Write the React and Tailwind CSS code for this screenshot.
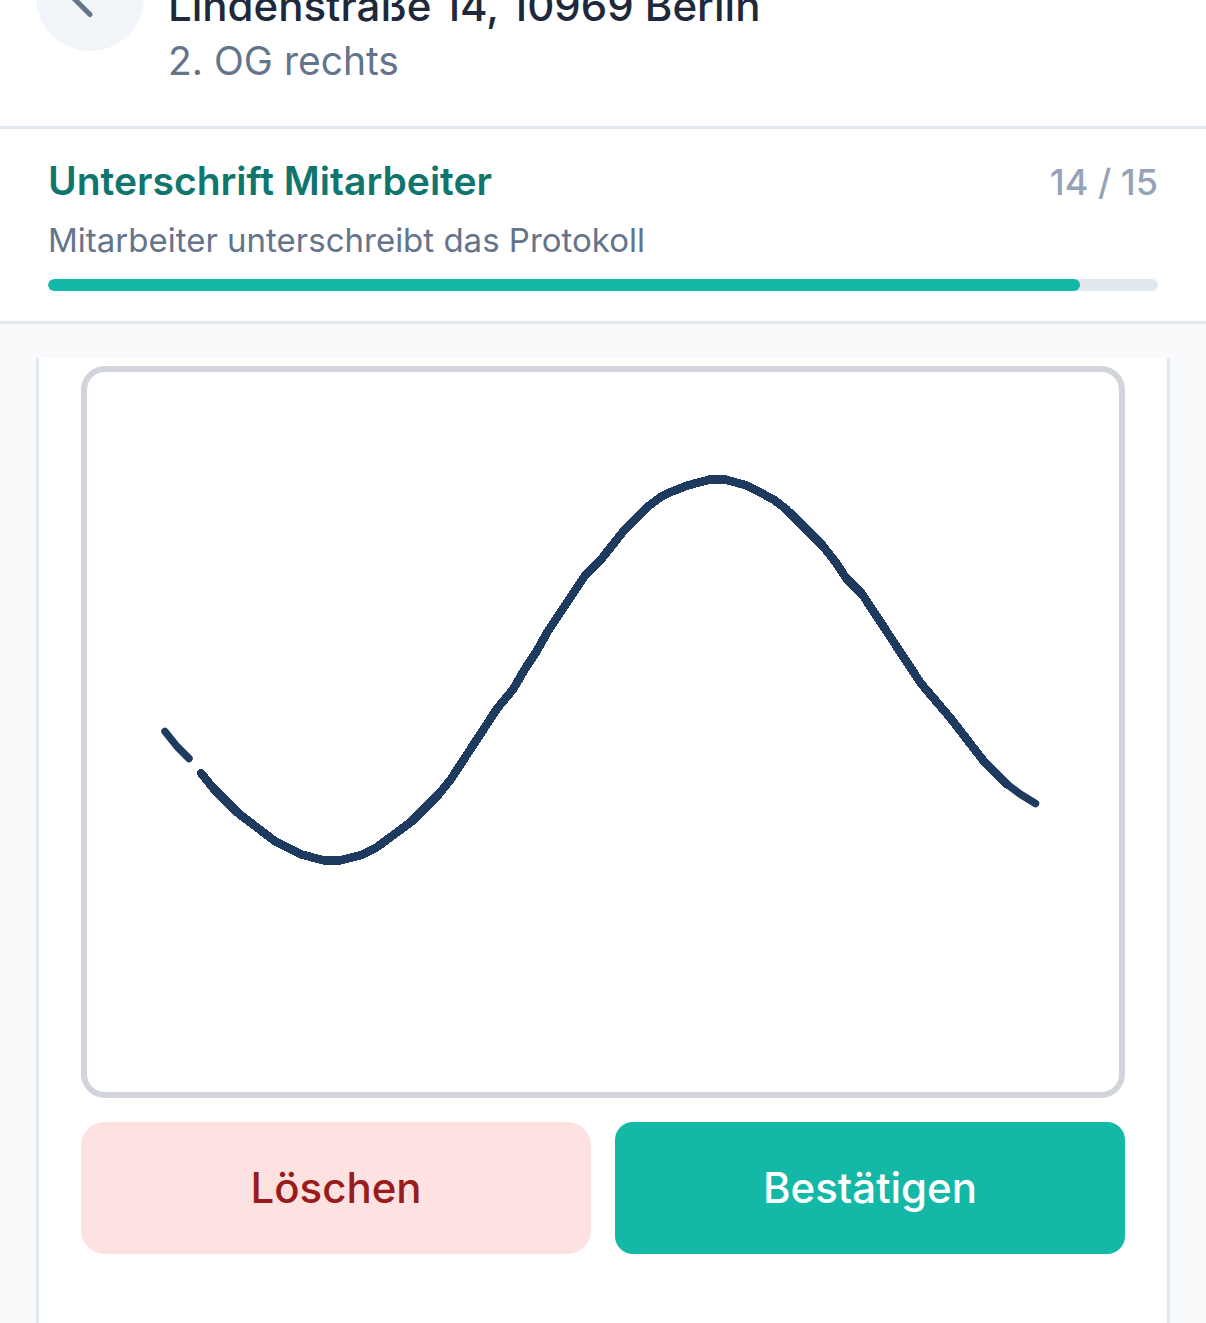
import React from "react";
import { ArrowLeft } from "lucide-react";

const step = {
  title: "Unterschrift Mitarbeiter",
  hint: "Mitarbeiter unterschreibt das Protokoll",
  current: 14,
  total: 15,
};

const Header = () => {
  return (
    <header className="-mt-[93px] flex items-start gap-6 border-b-3 border-[#e2e8f0] bg-white px-9 pt-9 pb-[38px]">
      <button
        type="button"
        aria-label="Zurück"
        className="flex size-[108px] shrink-0 items-center justify-center rounded-full bg-[#f1f5f9] text-[#64748b]"
      >
        <ArrowLeft size={60} strokeWidth={2} />
      </button>
      <div className="min-w-0 flex-1 pt-[35px]">
        <h1 className="text-[42px] leading-[56px] font-medium text-[#1e293b]">
          Lindenstraße 14, 10969 Berlin
        </h1>
        <p className="text-[39px] leading-[54px] text-[#64748b]">2. OG rechts</p>
      </div>
    </header>
  );
};

const StepProgress = ({ title, hint, current, total }) => {
  const percent = Math.round((current / total) * 100);

  return (
    <section className="border-b-3 border-[#e2e8f0] bg-white px-12 pt-6 pb-[30px]">
      <div className="flex items-baseline justify-between">
        <h2 className="text-[39px] leading-[55px] font-semibold text-[#0f766e]">{title}</h2>
        <span className="text-[36px] leading-[55px] font-medium text-[#94a3b8]">
          {current} / {total}
        </span>
      </div>
      <p className="mt-[5px] text-[33px] leading-[51px] text-[#64748b]">{hint}</p>
      <div className="mt-[13px] h-3 w-full overflow-hidden rounded-full bg-[#e2e8f0]">
        <div className="h-full rounded-full bg-[#14b8a6]" style={{ width: `${percent}%` }} />
      </div>
    </section>
  );
};

const SignaturePad = () => {
  return (
    <div className="overflow-hidden rounded-3xl border-6 border-[#d1d5db] bg-white">
      <svg
        viewBox="0 0 1032 720"
        className="block w-full text-[#1e3a5f]"
        fill="none"
        stroke="currentColor"
        strokeLinecap="round"
        strokeLinejoin="round"
        role="img"
        aria-label="Unterschrift"
      >
        <path strokeWidth="7.5" d="M78 359.5L90 374.5L102 386.5" />
        <path
          strokeWidth="8.5"
          shapeRendering="crispEdges"
          d="M114 401L126 416L151 441L189 470L213 482L237 488.5H252.5L276 482.5L288 476.5L324 450L352 422L364 407L410.5 336L426 317.5L437 298.5L449.5 279.5L461 259L498 203.5L514 187.5L537 158.5L561 134.5L573 125.5L585 119.5L600.5 113.5L623 107.5H638L660 113.5L686.5 127.5L699 137L735.5 173.5L748.5 190L759 206L775 222L834 311.5L863 345.5L897 389.5L921 413"
        />
        <path strokeWidth="7.5" d="M897 389.5L921 413L933 422L948.5 431.5" />
      </svg>
    </div>
  );
};

const App = () => {
  return (
    <div className="flex h-screen flex-col overflow-hidden bg-[#f8fafc] font-[Inter,sans-serif]">
      <Header />
      <StepProgress {...step} />
      <main className="flex flex-1 flex-col px-9 pt-[34px]">
        <div className="flex-1 border-x-3 border-[#e2e8f0] bg-white px-[42px] pt-2 shadow-[0_3px_6px_rgba(0,0,0,0.02)]">
          <SignaturePad />
          <div className="mt-6 grid grid-cols-2 gap-6">
            <button
              type="button"
              className="h-[132px] rounded-3xl bg-[#fee2e2] text-[42px] leading-[62px] font-medium text-[#991b1b]"
            >
              Löschen
            </button>
            <button
              type="button"
              className="h-[132px] rounded-[18px] bg-[#14b8a6] text-[42px] leading-[62px] font-medium text-white"
            >
              Bestätigen
            </button>
          </div>
        </div>
      </main>
    </div>
  );
};

export default App;
